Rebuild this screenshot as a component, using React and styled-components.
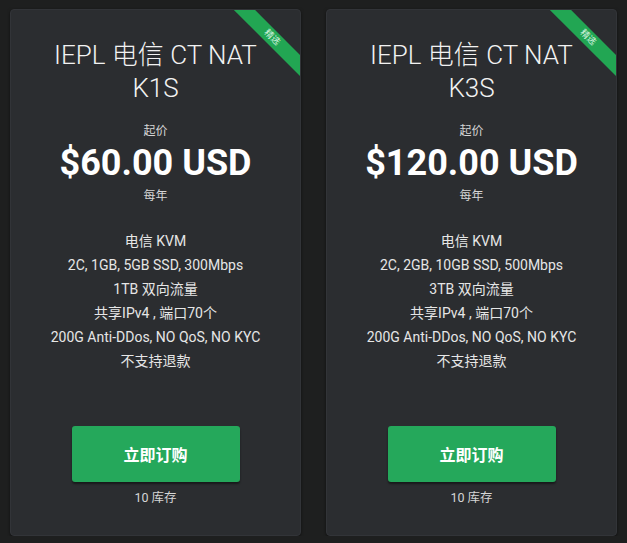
import React from 'react';
import styled, { createGlobalStyle } from 'styled-components';

const Global = createGlobalStyle`
  body {
    margin: 0;
    background: #1e1f1f;
    font-family: Roboto, "Noto Sans CJK SC", sans-serif;
  }
`;

const Page = styled.div`
  display: flex;
  gap: 25px;
  padding: 9px 0 0 10px;
`;

const Card = styled.div`
  position: relative;
  overflow: hidden;
  box-sizing: border-box;
  width: 291px;
  height: 527px;
  background: #2b2d30;
  border: 1px solid #323438;
  border-radius: 4px;
  box-shadow: 0 1px 3px rgba(0, 0, 0, 0.5);
  display: flex;
  flex-direction: column;
  align-items: center;
  padding: 29px 22px 0;
  color: #fff;
  text-align: center;
`;

const Ribbon = styled.span`
  position: absolute;
  top: 20px;
  right: -32px;
  width: 120px;
  height: 15px;
  line-height: 15px;
  background: #22a653;
  color: #d9f5e2;
  font-size: 9px;
  text-align: center;
  transform: rotate(45deg);
`;

const Title = styled.h2`
  margin: 0;
  font-size: 26px;
  font-weight: 300;
  line-height: 33px;
  color: #f2f2f2;
`;

const Small = styled.div`
  font-size: 12px;
  line-height: 18px;
  color: #d6d6d6;
  margin-top: ${p => p.$top}px;
`;

const Price = styled.div`
  margin-top: 3px;
  font-size: 36px;
  font-weight: 700;
  line-height: 40px;
  color: #fff;
`;

const Features = styled.ul`
  list-style: none;
  margin: 24px 0 0;
  padding: 0;
  font-size: 14px;
  line-height: 24px;
  color: #e6e6e6;
`;

const OrderButton = styled.button`
  margin-top: 53px;
  width: 168px;
  height: 56px;
  border: none;
  border-radius: 3px;
  background: #25a85b;
  color: #fff;
  font-family: inherit;
  font-size: 16px;
  font-weight: 700;
  box-shadow: 0 2px 2px rgba(0, 0, 0, 0.45);
`;

const Stock = styled(Small)`
  font-size: 12.5px;
`;

const plans = [
  {
    name: 'IEPL 电信 CT NAT K1S',
    price: '$60.00 USD',
    specs: ['电信 KVM', '2C, 1GB, 5GB SSD, 300Mbps', '1TB 双向流量', '共享IPv4 , 端口70个', '200G Anti-DDos, NO QoS, NO KYC', '不支持退款'],
  },
  {
    name: 'IEPL 电信 CT NAT K3S',
    price: '$120.00 USD',
    specs: ['电信 KVM', '2C, 2GB, 10GB SSD, 500Mbps', '3TB 双向流量', '共享IPv4 , 端口70个', '200G Anti-DDos, NO QoS, NO KYC', '不支持退款'],
  },
];

function App() {
  return (
    <>
      <Global />
      <Page>
        {plans.map(plan => (
          <Card key={plan.name}>
            <Ribbon>精选</Ribbon>
            <Title>{plan.name}</Title>
            <Small $top={17}>起价</Small>
            <Price>{plan.price}</Price>
            <Small $top={4}>每年</Small>
            <Features>
              {plan.specs.map(s => <li key={s}>{s}</li>)}
            </Features>
            <OrderButton>立即订购</OrderButton>
            <Stock $top={7}>10 库存</Stock>
          </Card>
        ))}
      </Page>
    </>
  );
}

export default App;
